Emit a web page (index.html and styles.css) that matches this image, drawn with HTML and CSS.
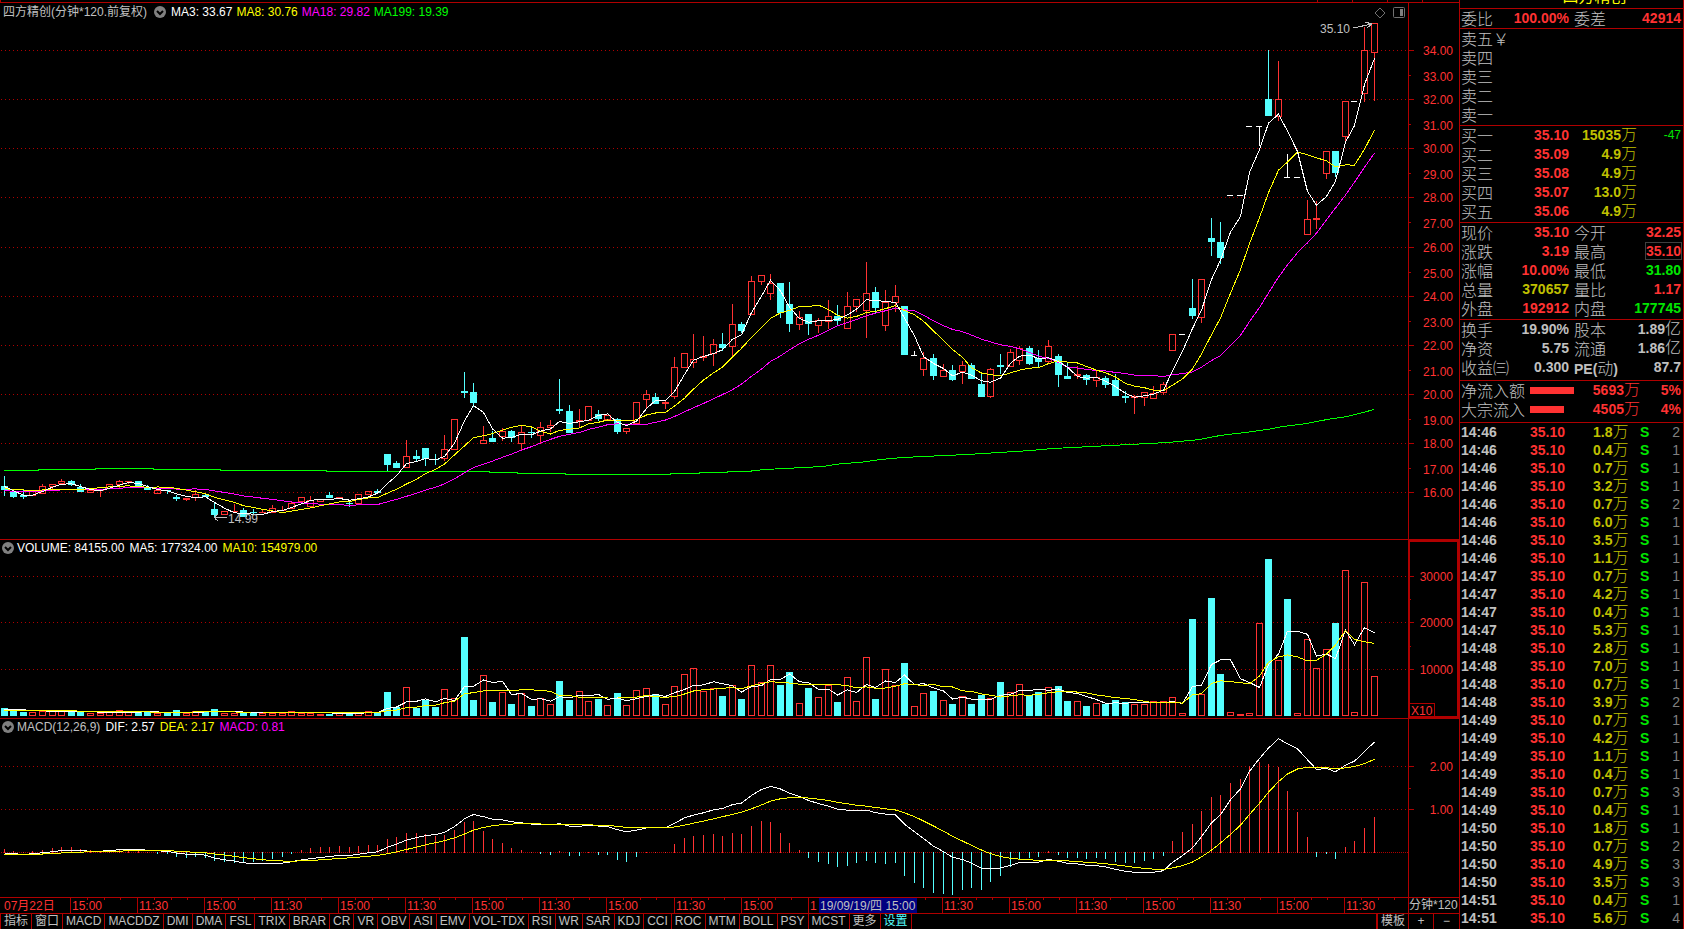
FILE: index.html
```html
<!DOCTYPE html>
<html lang="zh-CN">
<head>
<meta charset="utf-8">
<title>四方精创</title>
<link rel="stylesheet" href="styles.css">
</head>
<body>
<div class="app">
  <main class="charts">
    <section class="panel">
      <svg class="plot" id="price"></svg>
      <div class="legend">
        <span class="gray">四方精创(分钟*120.前复权)</span>
        <svg class="chevron" viewBox="0 0 12 12"><circle cx="6" cy="6" r="6"/><path d="M3 5l3 3 3-3"/></svg>
        <span class="white">MA3: 33.67</span><span class="yellow">MA8: 30.76</span><span class="magenta">MA18: 29.82</span><span class="lime">MA199: 19.39</span>
      </div>
      <div class="tools">
        <svg width="12" height="12" viewBox="0 0 12 12"><path d="M6 1l5 5-5 5-5-5z"/></svg>
        <svg width="12" height="12" viewBox="0 0 12 12"><rect x=".5" y=".5" width="11" height="10" rx="1"/><rect class="solid" x="7" y="2" width="3" height="7"/></svg>
      </div>
    </section>
    <section class="panel">
      <svg class="plot" id="volume"></svg>
      <div class="legend tight">
        <svg class="chevron" viewBox="0 0 12 12"><circle cx="6" cy="6" r="6"/><path d="M3 5l3 3 3-3"/></svg>
        <span class="white">VOLUME: 84155.00</span><span class="white">MA5: 177324.00</span><span class="yellow">MA10: 154979.00</span>
      </div>
    </section>
    <section class="panel">
      <svg class="plot" id="macd"></svg>
      <div class="legend tight">
        <svg class="chevron" viewBox="0 0 12 12"><circle cx="6" cy="6" r="6"/><path d="M3 5l3 3 3-3"/></svg>
        <span class="gray">MACD(12,26,9)</span><span class="white">DIF: 2.57</span><span class="yellow">DEA: 2.17</span><span class="magenta">MACD: 0.81</span>
      </div>
    </section>
    <div class="timebar">
      <svg class="plot" id="time"></svg>
      <span class="period">分钟*120</span>
    </div>
    <nav class="tabs">
      <button>指标</button><button>窗口</button><button>MACD</button><button>MACDDZ</button><button>DMI</button><button>DMA</button><button>FSL</button><button>TRIX</button><button>BRAR</button><button>CR</button><button>VR</button><button>OBV</button><button>ASI</button><button>EMV</button><button>VOL-TDX</button><button>RSI</button><button>WR</button><button>SAR</button><button>KDJ</button><button>CCI</button><button>ROC</button><button>MTM</button><button>BOLL</button><button>PSY</button><button>MCST</button><button>更多</button><button class="active">设置</button>
      <span class="spacer"></span>
      <button class="template">模板</button><button class="zoom">+</button><button class="zoom">−</button>
    </nav>
  </main>
  <aside class="quote">
    <div class="name">四方精创</div>
    <table class="grid one">
      <tr><th>委比</th><td class="red">100.00%</td><th>委差</th><td class="red">42914</td></tr>
    </table>
    <table class="grid book">
      <tr><th>卖五￥</th><td></td><td></td><td></td></tr>
      <tr><th>卖四</th><td></td><td></td><td></td></tr>
      <tr><th>卖三</th><td></td><td></td><td></td></tr>
      <tr><th>卖二</th><td></td><td></td><td></td></tr>
      <tr><th>卖一</th><td></td><td></td><td></td></tr>
    </table>
    <table class="grid book">
      <tr><th>买一</th><td class="red">35.10</td><td class="gold">15035<i>万</i></td><td class="delta">-47</td></tr>
      <tr><th>买二</th><td class="red">35.09</td><td class="gold">4.9<i>万</i></td><td></td></tr>
      <tr><th>买三</th><td class="red">35.08</td><td class="gold">4.9<i>万</i></td><td></td></tr>
      <tr><th>买四</th><td class="red">35.07</td><td class="gold">13.0<i>万</i></td><td></td></tr>
      <tr><th>买五</th><td class="red">35.06</td><td class="gold">4.9<i>万</i></td><td></td></tr>
    </table>
    <table class="grid">
      <tr><th>现价</th><td class="red">35.10</td><th>今开</th><td class="red">32.25</td></tr>
      <tr><th>涨跌</th><td class="red">3.19</td><th>最高</th><td class="red"><span class="boxed">35.10</span></td></tr>
      <tr><th>涨幅</th><td class="red">10.00%</td><th>最低</th><td class="green">31.80</td></tr>
      <tr><th>总量</th><td class="gold">370657</td><th>量比</th><td class="red">1.17</td></tr>
      <tr><th>外盘</th><td class="red">192912</td><th>内盘</th><td class="green">177745</td></tr>
    </table>
    <table class="grid loose">
      <tr><th>换手</th><td>19.90%</td><th>股本</th><td>1.89<i>亿</i></td></tr>
      <tr><th>净资</th><td>5.75</td><th>流通</th><td>1.86<i>亿</i></td></tr>
      <tr><th>收益㈢</th><td>0.300</td><th><b>PE(</b>动<b>)</b></th><td>87.7</td></tr>
    </table>
    <table class="grid flow loose">
      <tr><th>净流入额</th><td><span class="bar" style="width:44px"></span></td><td class="red">5693<i>万</i></td><td class="red">5%</td></tr>
      <tr><th>大宗流入</th><td><span class="bar" style="width:34px"></span></td><td class="red">4505<i>万</i></td><td class="red">4%</td></tr>
    </table>
    <table class="ticks" id="ticks"></table>
  </aside>
</div>
<script src="chart.js"></script>
</body>
</html>
```
FILE: styles.css
```css
* { box-sizing: border-box; }
html, body { margin: 0; height: 100%; background: #000; }
body {
  font-family: "Liberation Sans", "Noto Sans CJK SC", sans-serif;
  font-size: 12px;
  color: #c0c0c0;
  overflow: hidden;
}
.app { display: grid; grid-template-columns: minmax(0, 1fr) 225px; grid-template-rows: minmax(0, 1fr); height: 100vh; }
.charts {
  display: grid;
  grid-template-rows: minmax(0, 540fr) minmax(0, 179fr) minmax(0, 179fr) 16px 15px;
  min-width: 0;
}
.panel { position: relative; border-bottom: 1px solid #b00000; min-height: 0; }
.plot { display: block; width: 100%; height: 100%; shape-rendering: crispEdges; overflow: hidden; }
.plot text { font-size: 12px; }
.legend {
  position: absolute; top: 4px; left: 3px;
  display: flex; align-items: center; gap: 4px;
  line-height: 16px; white-space: pre;
}
.panel .tight { top: 0; left: 2px; gap: 5px; }
.chevron { width: 12px; height: 12px; margin: 0 1px 0 3px; }
.tight .chevron { margin: 0 -2px 0 0; }
.chevron circle { fill: #808080; }
.chevron path { fill: none; stroke: #000; stroke-width: 2; }
.tools { position: absolute; top: 7px; right: 54px; display: flex; gap: 7px; }
.tools svg { display: block; fill: none; stroke: #707070; }
.tools .solid { fill: #808080; stroke: none; }
.gray { color: #c0c0c0; }
.white { color: #fff; }
.yellow { color: #ff0; }
.magenta { color: #f0f; }
.lime { color: #0f0; }

.timebar { display: grid; grid-template-columns: minmax(0, 1fr) 51px; border-bottom: 1px solid #b00000; line-height: 15px; }
.period { border-left: 1px solid #b00000; white-space: nowrap; }
.tabs { display: flex; border-left: 1px solid #b00000; }
.tabs button {
  border: 0; border-right: 1px solid #b00000; background: none; margin: 0; padding: 0 3px;
  font: 12px/15px "Liberation Sans", "Noto Sans CJK SC", sans-serif; color: #c0c0c0; height: 15px;
}
.tabs .active { color: #54ffff; }
.tabs .spacer { flex: 1; border-right: 2px solid #b00000; }
.tabs .template { width: 31px; }
.tabs .zoom { width: 25px; }
.tabs .zoom:last-child { border-right: 0; }

.quote { border-left: 1px solid #b00000; border-right: 1px solid #b00000; overflow: hidden; }
.name {
  height: 9px; border-bottom: 1px solid #b00000; overflow: hidden;
  display: flex; justify-content: center; align-items: flex-end; padding: 0 0 5px 46px;
  font-size: 16px; line-height: 16px; color: #ff0; font-family: "Noto Sans CJK SC", sans-serif;
}
table { border-collapse: collapse; table-layout: fixed; width: 100%; }
.grid { display: block; border-bottom: 1px solid #b00000; padding-bottom: 1px; }
.one { padding-bottom: 0; }
.loose { padding-bottom: 3px; }
.grid tbody { display: block; }
.grid tr { display: grid; grid-template-columns: 52fr 61fr 50fr 57fr; height: 19px; padding: 0 2px 0 1px; }
.grid th, .grid td { padding: 0; height: 19px; line-height: 19px; white-space: nowrap; min-width: 0; }
.grid th { text-align: left; font: 300 16px/19px "Noto Sans CJK SC", sans-serif; color: #c0c0c0; }
.grid th b { font: bold 14px/0 "Liberation Sans", sans-serif; }
.grid td { text-align: right; font-weight: bold; font-size: 14px; }
.grid td:nth-child(2) { padding-right: 5px; }
i { font: 300 16px/0 "Noto Sans CJK SC", sans-serif; }
.grid.book tr { grid-template-columns: 52fr 61fr 63fr 44fr; }
.grid td.delta { font-size: 12px; font-weight: normal; color: #00e600; }
.grid.flow tr { grid-template-columns: 69fr 48fr 62fr 41fr; }
.grid.flow td:nth-child(2) { text-align: left; padding: 0; }
.bar { display: block; height: 7px; margin-top: 6px; background: #ff3232; }
.grid .red, .red { color: #ff3232; }
.grid .gold, .gold { color: #c0c000; }
.grid .green, .green { color: #00e600; }
.boxed { display: inline-block; line-height: 16px; outline: 1px solid #404040; }

.ticks td { height: 18px; padding: 0; line-height: 18px; font-size: 14px; font-weight: bold; white-space: nowrap; }
.ticks td:nth-child(1) { width: 70px; padding-left: 1px; }
.ticks td:nth-child(2) { width: 63px; }
.ticks td:nth-child(3) { width: 47px; }
.ticks td:nth-child(5) { text-align: right; padding-right: 3px; color: #808080; font-weight: normal; }
```
FILE: chart.js
```js
const RED = '#ff3232', CYAN = '#54ffff', WHITE = '#fff', YELLOW = '#ff0',
      MAGENTA = '#f0f', GREEN = '#0f0', LINE = '#b00000', GRAY = '#c0c0c0';

// Each candle: kind (r up, c down, w flat), then high, body top, body bottom, low.
const candles = `c476,486,490,496 c491,492,497,498 c490,495,497,499 r490,490,496,496 r484,486,494,494 r484,484,487,489
r479,481,484,484 c480,481,485,486 c484,487,492,492 r490,490,493,493 r489,489,491,497 r484,484,489,489 r480,481,485,488
r481,481,482,484 c481,481,487,488 c485,487,490,490 r490,490,494,494 c490,490,491,494 c495,497,499,501 r498,498,500,501
r490,494,498,501 c493,495,497,497 c502,509,515,518 r511,511,515,515 r504,511,512,512 c508,510,517,517 c509,512,513,514
r509,512,513,513 r505,508,513,513 r506,510,511,511 r501,503,509,509 r497,497,502,502 r496,500,507,507 r499,499,502,502
c492,495,498,498 r497,497,498,498 c502,503,504,507 r494,494,504,504 r491,491,495,495 c489,491,493,493 c454,454,465,471
c461,463,468,468 r440,456,468,468 c450,456,459,461 c448,448,459,466 c454,459,460,465 r435,449,459,461 r419,419,450,450
c372,391,393,398 c383,392,403,407 r426,440,444,444 c431,438,442,442 r428,431,437,441 c430,431,438,442 r425,432,444,450
c427,432,433,438 r422,427,436,443 r420,425,428,432 c379,409,411,414 c405,411,433,433 r409,420,422,427 r406,406,421,421
c410,414,419,421 r415,415,420,420 c418,419,432,434 r428,428,432,434 r402,402,424,424 r390,394,400,408 c393,397,404,404
r401,402,404,409 r357,367,397,399 r353,353,368,368 r334,359,363,368 r336,356,358,361 r339,344,354,366 c333,344,348,351
r304,324,347,356 c322,324,331,333 r276,281,315,315 r275,275,282,285 r274,283,294,300 c283,283,313,318 c282,304,324,332
r311,317,325,330 c314,314,324,335 r318,320,326,333 r300,316,322,329 c305,316,321,325 r292,306,329,329 r299,299,307,312
r262,293,311,338 c287,292,308,313 r290,302,326,331 r285,296,303,312 c306,306,355,355 w351,355,355,355 r352,358,370,376
c354,358,376,380 r364,370,377,377 c365,370,380,381 r361,365,372,384 c363,365,379,379 c372,384,397,397 r368,369,397,398
c354,365,367,374 r349,352,367,367 r346,348,361,365 c346,348,364,365 c350,358,362,367 r340,346,362,364 c354,356,375,387
c362,376,379,379 r366,374,376,379 c374,375,380,385 r370,377,381,387 c376,378,385,388 c374,380,396,396 c391,396,398,403
r395,396,398,414 r392,392,398,406 r386,393,399,399 r382,384,393,395 r334,334,351,351 w334,334,334,334 c279,308,316,319
r279,279,318,323 c218,238,242,256 c222,242,258,264 w195,195,195,195 w195,195,195,195 w126,126,126,126 w126,126,126,146
c50,99,116,116 r61,99,117,121 w154,177,177,177 w177,177,177,177 r200,219,235,235 r201,218,220,229 r151,151,174,179
c151,151,173,177 r101,101,137,141 w101,101,101,101 r27,50,94,102 r23,23,53,101`.split(/\s+/).map(s => [s[0], ...s.slice(1).split(',').map(Number)]);

// Top edge of each volume bar, in thirds of a pixel.
const volTops = [535,541,545,547,544,544,544,545,545,549,549,547,541,547,547,545,549,549,541,549,544,547,538,549,549,547,547,549,549,549,
544,549,549,551,551,549,549,549,544,547,486,530,472,534,511,531,478,505,321,510,436,516,486,522,490,528,505,523,454,510,484,514,506,526,490,
526,481,475,492,523,469,433,415,484,475,498,466,507,406,457,406,465,427,520,474,502,464,516,442,514,382,508,418,466,400,529,490,484,511,522,
499,522,495,505,457,487,463,496,486,472,468,514,514,528,520,522,510,517,522,522,514,514,502,550,268,493,205,433,547,553,550,280,88,391,208,
550,328,415,358,280,121,547,157,439].map(v => v / 3 - 10);

const closes = candles.map(c => c[0] === 'c' ? c[3] : c[2]);
const average = (values, n, lead) => {
  const all = lead.concat(values);
  return values.map((_, i) => {
    const end = i + lead.length + 1;
    const part = all.slice(Math.max(0, end - n), end);
    return part.reduce((a, b) => a + b, 0) / part.length;
  });
};
const priceLead = [...Array(13).fill(492), 488, 488, 488, 484, 484];
const ma199 = [[4,470],[38,470],[39,469],[95,469],[96,468],[153,468],[154,469],[220,469],[221,470],[326,470],[327,471],[489,471],
[490,472],[517,472],[518,473],[565,473],[566,474],[670,474],[671,473],[699,473],[700,472],[727,472],[728,471],[747,471],[765,469],
[804,467],[823,466],[842,463],[860,462],[881,459],[902,457],[967,454],[1031,450],[1053,448],[1092,446],[1130,444],[1168,442],
[1200,439],[1220,435],[1245,432],[1267,429],[1283,426],[1307,423],[1327,419],[1347,416],[1363,412],[1374,409]];

// MACD from the closing prices.
const dif = [], dea = [];
let fast = 491.4, slow = 491, signal = -0.06;
closes.forEach(c => {
  fast += (c - fast) * 2 / 13;
  slow += (c - slow) * 2 / 27;
  const d = (slow - fast) / 24.56;
  signal += (d - signal) * 0.2;
  dif.push(d);
  dea.push(signal);
});

const NS = 'http://www.w3.org/2000/svg';
function surface(id, designHeight) {
  const svg = document.getElementById(id);
  svg.replaceChildren();
  const w = svg.clientWidth, h = svg.clientHeight;
  const axis = id === 'time' ? w : w - 51;
  const sx = axis / 1408, sy = h / designHeight;
  const add = (tag, attrs, text) => {
    const el = document.createElementNS(NS, tag);
    for (const k in attrs) el.setAttribute(k, attrs[k]);
    if (text) el.textContent = text;
    svg.append(el);
  };
  const X = x => x * sx, Y = y => y * sy;
  return {
    w, h, axis, add, X, Y,
    col: i => Math.floor(X(4.2 + 9.58 * i)),
    rect: (x, y, width, height, fill) => add('rect', { x, y, width, height, fill }),
    box: (x, y, width, height, stroke) => add('rect', { x: x + .5, y: y + .5, width: width - 1, height: height - 1, fill: 'none', stroke }),
    path: (pts, stroke) => add('polyline', { points: pts.map(p => p.join()).join(' '), fill: 'none', stroke }),
    grid: (y, dash) => add('line', { x1: 1, x2: axis, y1: y + .5, y2: y + .5, stroke: LINE, 'stroke-dasharray': dash || '1 3' }),
    text: (x, y, s, fill, anchor) => add('text', { x, y, fill, 'text-anchor': anchor || 'start' }, s)
  };
}
function frame(g) {
  g.rect(g.axis, 0, 1, g.h, LINE);
}
function scale(g, y, label, shift = 5) {
  g.text(g.w - 6, y + shift, label, RED, 'end');
}
function drawPrice() {
  const g = surface('price', 539);
  const rows = [50, 99, 148, 197, 247, 296, 345, 394, 443, 492].map(y => Math.round(g.Y(y)));
  rows.forEach((y, k) => {
    g.grid(y);
    g.rect(g.axis, y, 6, 1, LINE);
    scale(g, y, (34 - 2 * k) + '.00');
    if (k < 9) {
      const m = Math.round((y + rows[k + 1]) / 2);
      g.rect(g.axis, m, 3, 1, LINE);
      scale(g, m, (33 - 2 * k) + '.00', 6);
    }
  });
  g.rect(0, 2, g.w, 1, LINE);
  [0, 1317, 1352, 1387, 1422].forEach(x => g.rect(g.X(x), 0, 1, 2, LINE));
  g.rect(g.axis, 2, 1, g.h, LINE);
  candles.forEach(([kind, hi, top, bottom, lo], i) => {
    const x = g.col(i);
    [hi, top, bottom, lo] = [hi, top, bottom, lo].map(v => Math.round(g.Y(v)));
    const color = kind === 'r' ? RED : kind === 'c' ? CYAN : WHITE;
    if (kind === 'w') {
      g.rect(x - 3, top, 6, 1, color);
      g.rect(x, hi, 1, lo - hi, color);
    } else if (kind === 'c') {
      g.rect(x, hi, 1, lo - hi, color);
      g.rect(x - 3, top, 7, Math.max(1, bottom - top), color);
    } else {
      g.rect(x, hi, 1, top - hi, color);
      g.rect(x, bottom, 1, lo - bottom, color);
      if (bottom - top < 3) g.rect(x - 3, top, 7, Math.max(1, bottom - top), color);
      else g.box(x - 3, top, 7, bottom - top, color);
    }
  });
  const line = values => values.map((v, i) => [g.col(i) + .5, g.Y(v) + .5]);
  g.path(ma199.map(([x, y]) => [g.X(x), g.Y(y) + .5]), GREEN);
  g.path(line(average(closes, 18, priceLead)), MAGENTA);
  g.path(line(average(closes, 8, priceLead)), YELLOW);
  g.path(line(average(closes, 3, priceLead)), WHITE);
  g.text(g.X(1320), g.Y(33), '35.10', GRAY);
  g.add('path', { d: 'M0 4L19 0M12 -2L19 0L14 4', transform: `translate(${g.X(1353)} ${g.Y(24)})`, stroke: GRAY, fill: 'none' });
  g.text(g.X(228), g.Y(523), '14.99', GRAY);
  g.add('path', { d: 'M12 .5H0M3 -3L0 .5L3 4M.5 -2V3', transform: `translate(${g.X(215)} ${g.Y(517)})`, stroke: GRAY, fill: 'none' });
}
function drawVolume() {
  const g = surface('volume', 178);
  [36, 82, 129].forEach((v, k) => {
    const y = Math.round(g.Y(v));
    g.grid(y);
    g.rect(g.axis, y, 6, 1, LINE);
    scale(g, y, (3 - k) + '0000');
  });
  [59, 106].forEach(v => g.rect(g.axis, Math.round(g.Y(v)), 3, 1, LINE));
  const base = Math.round(g.Y(176));
  volTops.forEach((v, i) => {
    const x = g.col(i) - 3, y = Math.round(g.Y(v));
    const down = candles[i][0] === 'c' || i === 134;
    if (down) g.rect(x, y, 7, base - y, CYAN);
    else g.box(x, y, 7, Math.max(2, base - y), RED);
  });
  const line = values => values.map((v, i) => [g.col(i) + .5, g.Y(v)]);
  g.path(line(average(volTops, 5, Array(5).fill(169.5))), WHITE);
  g.path(line(average(volTops, 10, Array(10).fill(170.5))), YELLOW);
  frame(g);
  g.add('rect', { x: g.axis + 1, y: 1, width: g.w - g.axis - 2, height: g.h - 2, fill: 'none', stroke: LINE, 'stroke-width': 2 });
  g.box(g.axis + 1, g.h - 15, 26, 15, LINE);
  g.text(g.axis + 3, g.h - 3, 'X10', RED);
}
function drawMacd() {
  const g = surface('macd', 178);
  const zero = Math.round(g.Y(133));
  const val = v => zero + .5 - g.Y(43 * v);
  [2, 1].forEach(n => {
    const y = Math.round(val(n) - .5);
    g.grid(y);
    g.rect(g.axis, y, 6, 1, LINE);
    scale(g, y, n + '.00');
  });
  g.rect(g.axis, Math.round(val(1.5)), 3, 1, LINE);
  g.grid(zero, '1 1');
  dif.forEach((d, i) => {
    const len = Math.round(g.Y(86 * (d - dea[i])));
    if (len >= 0) g.rect(g.col(i), zero - len, 1, len + 1, RED);
    else g.rect(g.col(i), zero, 1, -len + 1, CYAN);
  });
  g.path(dif.map((v, i) => [g.col(i) + .5, val(v)]), WHITE);
  g.path(dea.map((v, i) => [g.col(i) + .5, val(v)]), YELLOW);
  frame(g);
}
function drawTime() {
  const g = surface('time', 15);
  g.text(4, 12, '07月22日', RED);
  for (let k = 0; k < 20; k++) {
    const x = Math.round(g.X(70 + 67.06 * k));
    g.rect(x, 0, 1, 15, LINE);
    [17, 34, 50].forEach(d => g.rect(Math.round(g.X(70 + 67.06 * k + d)), 0, 1, 2, LINE));
    if (k === 12) continue;
    g.text(x + 2, 12, k === 11 ? '1' : k % 2 ? '11:30' : '15:00', RED);
  }
  const left = Math.round(g.X(819));
  g.rect(left, 0, 98, 15, '#000080');
  g.text(left + 1, 12, '19/09/19/四 15:00', GRAY);
}
function draw() { drawPrice(); drawVolume(); drawMacd(); drawTime(); }
draw();
addEventListener('resize', draw);

const trades = `14:46 1.8 2|14:46 0.4 1|14:46 0.7 1|14:46 3.2 1|14:46 0.7 2|14:46 6.0 1|14:46 3.5 1|14:46 1.1 1|14:47 0.7 1|14:47 4.2 1|14:47 0.4 1|14:47 5.3 1|14:48 2.8 1|14:48 7.0 1|14:48 0.7 1|14:48 3.9 2|14:49 0.7 1|14:49 4.2 1|14:49 1.1 1|14:49 0.4 1|14:49 0.7 3|14:49 0.4 1|14:50 1.8 1|14:50 0.7 2|14:50 4.9 3|14:50 3.5 3|14:51 0.4 1|14:51 5.6 4`;
document.getElementById('ticks').innerHTML = trades.split('|').map(t => {
  const [time, amount, count] = t.split(' ');
  return `<tr><td>${time}</td><td class="red">35.10</td><td class="gold">${amount}<i>万</i></td><td class="green">S</td><td>${count}</td></tr>`;
}).join('');
```
